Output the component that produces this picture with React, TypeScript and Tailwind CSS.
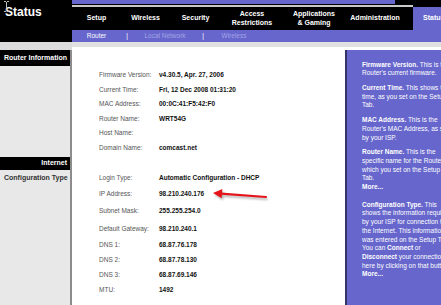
import React from 'react'

const navItems = [
  { label: ['Setup'], w: 'w-[49px]' },
  { label: ['Wireless'], w: 'w-[49px]' },
  { label: ['Security'], w: 'w-[51px]' },
  { label: ['Access', 'Restrictions'], w: 'w-[62px]' },
  { label: ['Applications', '& Gaming'], w: 'w-[62px]' },
  { label: ['Administration'], w: 'w-[68px] pr-[8px]' },
]

const routerRows = [
  ['Firmware Version:', 'v4.30.5, Apr. 27, 2006'],
  ['Current Time:', 'Fri, 12 Dec 2008 01:31:20'],
  ['MAC Address:', '00:0C:41:F5:42:F0'],
  ['Router Name:', 'WRT54G'],
  ['Host Name:', ''],
  ['Domain Name:', 'comcast.net'],
]

const internetRows = [
  ['Login Type:', 'Automatic Configuration - DHCP', 'h-[16px]'],
  ['IP Address:', '98.210.240.176', 'h-[16px]'],
  ['Subnet Mask:', '255.255.254.0', 'h-[18px]'],
  ['Default Gateway:', '98.210.240.1', 'h-[18px]'],
  ['DNS 1:', '68.87.76.178', 'h-[14px]'],
  ['DNS 2:', '68.87.78.130', 'h-[16px]'],
  ['DNS 3:', '68.87.69.146', 'h-[14px]'],
  ['MTU:', '1492', 'h-[16px]'],
]

function Row({ label, value, h }: { label: string; value: string; h: string }) {
  return (
    <div className={`flex items-center whitespace-nowrap ${h}`}>
      <span className="w-[60px] shrink-0 text-[#555]">{label}</span>
      <span className="font-bold text-[#111]">{value}</span>
    </div>
  )
}

export default function App() {
  return (
    <div className="relative w-[441px] h-[305px] overflow-hidden bg-white flex font-['Liberation_Sans',Arial,sans-serif]">
      {/* left column */}
      <div className="w-[72px] shrink-0 flex flex-col">
        <div className="h-[42px] bg-black pl-[5px] pt-[6px] text-white font-bold text-[12px] leading-[12px]">
          Status
        </div>
        <div className="h-[8px] bg-[#dcdcdc]" />
        <div className="flex-1 bg-[#e8e8e8] border-r-2 border-[#8c8c8c] flex flex-col">
          <div className="h-[16px] bg-black text-white font-bold text-[7px] flex items-center pl-[4px] whitespace-nowrap">
            Router Information
          </div>
          <div className="h-[91px]" />
          <div className="h-[13px] bg-black text-white font-bold text-[7px] flex items-center justify-end pr-[3px]">
            Internet
          </div>
          <div className="h-[16px] flex items-center pl-[4px] text-[7px] font-bold text-[#333] whitespace-nowrap">
            Configuration Type
          </div>
        </div>
      </div>

      {/* right column */}
      <div className="flex-1 min-w-0 flex flex-col">
        <div className="h-[30px] bg-black flex flex-col">
          <div className="h-[4px] w-[323px] bg-[#6666cc]" />
          <div className="h-[1px]" />
          <div className="h-[2px] w-[341px] bg-[#c8c8c8]" />
          <div className="h-[23px] flex">
            {navItems.map((n) => (
              <div
                key={n.label[0]}
                className={`${n.w} shrink-0 flex flex-col items-center justify-center text-white font-bold text-[7px] leading-[8.5px] whitespace-nowrap`}
              >
                {n.label.map((l) => (
                  <span key={l}>{l}</span>
                ))}
              </div>
            ))}
            <div className="flex-1 bg-[#6666cc] flex items-center pl-[10px] text-white font-bold text-[7px]">
              Status
            </div>
          </div>
        </div>
        <div className="h-[12px] bg-[#6666cc] flex items-center text-[6.5px] whitespace-nowrap">
          <span className="w-[49px] text-center text-white">Router</span>
          <span className="w-[12px] text-center text-white">|</span>
          <span className="w-[64px] text-center text-[#a4a4e4]">Local Network</span>
          <span className="w-[12px] text-center text-white">|</span>
          <span className="w-[50px] text-center text-[#a4a4e4]">Wireless</span>
        </div>
        <div className="h-[5px] bg-[#e0e0e0]" />

        <div className="flex-1 flex">
          <div className="w-[273px] shrink-0 pl-[27px] pt-[20.7px] text-[6.5px]">
            {routerRows.map(([l, v]) => (
              <Row key={l} label={l} value={v} h="h-[14.6px]" />
            ))}
            <div className="h-[14.7px]" />
            {internetRows.map(([l, v, h]) => (
              <Row key={l} label={l} value={v} h={h} />
            ))}
          </div>

          <div className="mt-[3px] w-[200px] shrink-0 bg-[#6666cc] border-l-2 border-[#333366] pl-[15px] pt-[10.6px] text-white text-[6.5px] leading-[8.7px] whitespace-nowrap">
            <p className="mb-[6px]">
              <b>Firmware Version.</b> This is the
              <br />
              Router's current firmware.
            </p>
            <p className="mb-[6px]">
              <b>Current Time.</b> This shows the
              <br />
              time, as you set on the Setup
              <br />
              Tab.
            </p>
            <p className="mb-[6px]">
              <b>MAC Address.</b> This is the
              <br />
              Router's MAC Address, as seen
              <br />
              by your ISP.
            </p>
            <p className="mb-[9px]">
              <b>Router Name.</b> This is the
              <br />
              specific name for the Router,
              <br />
              which you set on the Setup
              <br />
              Tab.
              <br />
              <b>More...</b>
            </p>
            <p>
              <b>Configuration Type.</b> This
              <br />
              shows the information required
              <br />
              by your ISP for connection to
              <br />
              the Internet. This information
              <br />
              was entered on the Setup Tab.
              <br />
              You can <b>Connect</b> or
              <br />
              <b>Disconnect</b> your connection
              <br />
              here by clicking on that button.
              <br />
              <b>More...</b>
            </p>
          </div>
        </div>
      </div>

      {/* red annotation arrow */}
      <svg className="absolute left-[205px] top-[184px]" width="70" height="22" viewBox="0 0 70 22">
        <defs>
          <filter id="sh" x="-20%" y="-50%" width="140%" height="200%">
            <feGaussianBlur stdDeviation="1.2" />
          </filter>
        </defs>
        <g transform="translate(1.5 2)" filter="url(#sh)" opacity="0.45" fill="#555" stroke="#555">
          <line x1="61" y1="13" x2="16" y2="9.7" strokeWidth="2.2" />
          <polygon points="8,9 17.3,5 16.7,14.3" stroke="none" />
        </g>
        <line x1="61" y1="13" x2="16" y2="9.7" stroke="#e4141a" strokeWidth="2.2" strokeLinecap="round" />
        <polygon points="8,9 17.3,5 16.7,14.3" fill="#e4141a" />
      </svg>

      {/* mouse I-beam cursor */}
      <svg className="absolute left-[3px] top-[1px]" width="7" height="11" viewBox="0 0 7 11">
        <path d="M1 0.5h2M4 0.5h2M3.5 1v9M1 10.5h2M4 10.5h2" stroke="#bdbdbd" strokeWidth="1" fill="none" />
      </svg>
    </div>
  )
}
